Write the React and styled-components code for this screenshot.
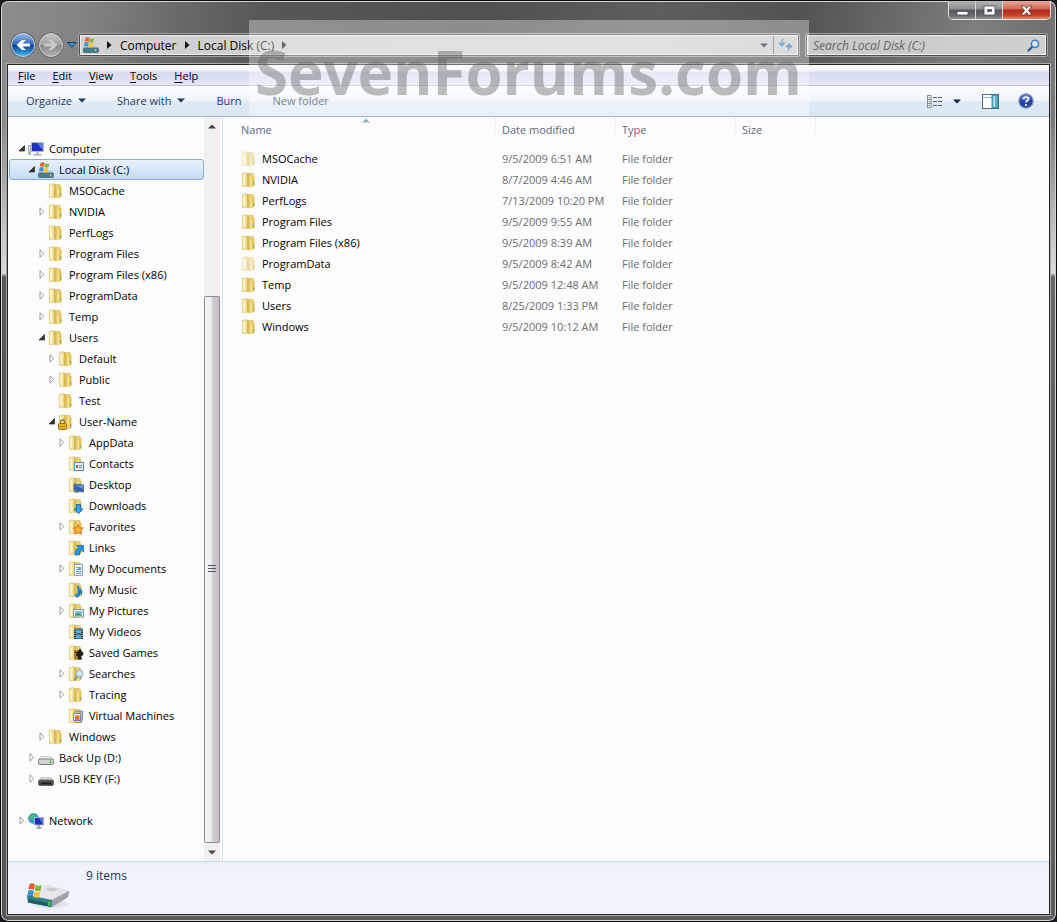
import React from "react";
import styled, { createGlobalStyle, css } from "styled-components";

const GlobalStyle = createGlobalStyle`
  * { box-sizing: border-box; }
  body {
    margin: 0;
    background: #17181c;
    font-family: "Open Sans", "Noto Sans", sans-serif;
    font-size: 11px;
    line-height: 21px;
    color: #000;
  }
  button, input { font: inherit; color: inherit; }
  button { border: 0; padding: 0; background: none; }
  svg { display: block; flex: none; }
`;

/* ---------- window frame ---------- */

const Window = styled.div`
  position: relative;
  display: flex;
  flex-direction: column;
  min-height: 100vh;
  padding: 0 5px 5px;
  border: 1px solid #0c0c10;
  border-radius: 8px;
  box-shadow: inset 0 0 0 1px #d4d4d4;
  background:
    linear-gradient(#8e8c8c, #8a8888 120px, #dcdada 272px, #5a5758 276px, #565455) left / 7px 100% no-repeat,
    linear-gradient(#747474, #7a7a7a 120px, #dedede 272px, #666 276px, #5c5c5c) right / 7px 100% no-repeat,
    linear-gradient(100deg, #8e8c8c 0, #848383 8%, #696969 17%, #575757 25%, #505050 45%, #5e5e5e 62%, #525252 75%, #7e7e7e 92%, #6c6c6c 100%) top / 100% 66px no-repeat,
    #5b5b59;
`;

const TitleArea = styled.header`
  display: flex;
  flex-direction: column;
  justify-content: space-between;
  height: 62px;
  padding-bottom: 5px;
`;

const CaptionButtons = styled.div`
  display: flex;
  align-self: flex-end;
  height: 19px;
  border: 1px solid #e4e4e4;
  border-top: 0;
  border-radius: 0 0 5px 5px;
  overflow: hidden;
`;

const CaptionButton = styled.button`
  display: flex;
  align-items: center;
  justify-content: center;
  width: ${(p) => (p.$close ? 47 : 27)}px;
  border-right: ${(p) => (p.$close ? 0 : 1)}px solid #d6d6d6;
  background: ${(p) =>
    p.$close
      ? "linear-gradient(#e8aa9c, #cf6552 45%, #b0281a 50%, #c8442c 80%, #e58a6a)"
      : "linear-gradient(#b4b4b4, #8d8d8d 45%, #58585c 50%, #6b6b6f 80%, #929296)"};
`;

const NavRow = styled.div`
  display: flex;
  align-items: center;
  height: 26px;
  padding: 0 3px 0 4px;
`;

const NavButtons = styled.div`
  display: flex;
  align-items: center;
  gap: 2px;
`;

const fieldFrame = css`
  display: flex;
  align-items: stretch;
  height: 24px;
  border: 1px solid #a2a2a2;
  border-radius: 2px;
  box-shadow: inset 0 0 0 1px #4d4d4d, inset 0 0 0 2px #f0f0f0;
  padding: 2px;
`;

const AddressBar = styled.div`
  ${fieldFrame}
  flex: 1;
  margin-right: 5px;
  background: linear-gradient(90deg, #d2d2d2, #cdcdcd 30%, #d3d3d3 70%, #c9c9c9);
`;

const Crumbs = styled.nav`
  display: flex;
  align-items: center;
  flex: 1;
`;

const Crumb = styled.button`
  margin: 0 8px;
  font-size: 12px;
`;

const DriveSlot = styled.span`
  padding: 0 8px 0 2px;
`;

const AddressTool = styled.button`
  display: flex;
  align-items: center;
  justify-content: center;
  width: ${(p) => (p.$wide ? 24 : 18)}px;
  border-left: ${(p) => (p.$wide ? 1 : 0)}px solid #6f6f6f;
`;

const SearchBox = styled.label`
  ${fieldFrame}
  align-items: center;
  width: 243px;
  background: linear-gradient(90deg, #c9c9c9, #d0d0d0);
  padding: 0 7px;
`;

const SearchInput = styled.input`
  flex: 1;
  min-width: 0;
  border: 0;
  padding: 0;
  background: transparent;
  outline: 0;
  font-size: 12px;
  font-style: italic;
  &::placeholder { color: #646464; opacity: 1; }
`;

/* ---------- client area ---------- */

const Client = styled.main`
  display: flex;
  flex-direction: column;
  flex: 1;
  border: 1px solid #a9a9a9;
  box-shadow: inset 0 0 0 1px #252528;
  padding: 1px;
  background: #fcfcfc;
`;

const MenuBar = styled.nav`
  display: flex;
  gap: 1px;
  height: 21px;
  padding: 0 2px;
  border-bottom: 1px solid #bcc2da;
  background: linear-gradient(#fff, #f2f4fc 30%, #d6dbef 36%, #e3e7f7);
`;

const MenuItem = styled.button`
  padding: 0 8px;
  & u { text-underline-offset: 2px; }
`;

const Toolbar = styled.div`
  display: flex;
  align-items: center;
  height: 31px;
  padding: 0 15px 0 18px;
  border-bottom: 1px solid #a7b6c8;
  background: linear-gradient(#fdfeff, #eef5fc 48%, #dfeaf6 52%, #dbe6f4);
  color: #1e395b;
`;

const ToolButton = styled.button`
  display: flex;
  align-items: center;
  gap: 6px;
  margin-right: 31px;
  padding-bottom: 2px;
`;

const ToolbarRight = styled.div`
  display: flex;
  align-items: center;
  margin-left: auto;
`;

const IconButton = styled.button`
  margin-left: ${(p) => p.$gap || 0}px;
`;

const Body = styled.div`
  display: flex;
  flex: 1;
`;

/* ---------- folder tree ---------- */

const TreePane = styled.aside`
  display: flex;
  width: 215px;
  border-right: 1px solid #d6e5f5;
`;

const Tree = styled.ul`
  flex: 1;
  margin: 0;
  padding: 21px 0 21px 1px;
  list-style: none;
`;

const TreeItem = styled.li`
  margin-top: ${(p) => (p.$apart ? 21 : 0)}px;
`;

const TreeRow = styled.button`
  display: flex;
  align-items: center;
  width: 100%;
  height: 21px;
  padding-left: ${(p) => 7 + p.$level * 10}px;
  border: 1px solid ${(p) => (p.$selected ? "#84acdd" : "transparent")};
  border-radius: 3px;
  background: ${(p) => (p.$selected ? "linear-gradient(#e9f2fd, #c4dcfa)" : "none")};
  white-space: nowrap;
`;

const Expander = styled.span`
  display: flex;
  justify-content: flex-end;
  width: 9px;
  margin-right: 2px;
`;

const TreeLabel = styled.span`
  margin-left: 5px;
`;

const ScrollTrack = styled.div`
  display: flex;
  flex-direction: column;
  align-items: center;
  width: 16px;
  margin-right: 2px;
  background: #f0f0f0;
`;

const ScrollArrow = styled.button`
  display: flex;
  align-items: center;
  justify-content: center;
  width: 16px;
  height: 18px;
`;

const ScrollGap = styled.div`
  flex: 161;
`;

const ScrollThumb = styled.div`
  display: flex;
  align-items: center;
  justify-content: center;
  flex: 547;
  width: 16px;
  border: 1px solid #8c8c90;
  border-radius: 2px;
  background: linear-gradient(90deg, #f6f6f6, #ececee 45%, #cfcfd3 55%, #bfbfc5);
`;

/* ---------- file list ---------- */

const ListPane = styled.section`
  flex: 1;
  min-width: 0;
  padding-left: 12px;
`;

const FileTable = styled.table`
  border-collapse: collapse;
  table-layout: fixed;
  width: 581px;
`;

const Col = styled.col`
  width: ${(p) => p.$w}px;
`;

const HeadCell = styled.th`
  position: relative;
  height: 31px;
  padding: 2px 6px 8px;
  text-align: left;
  font-weight: 400;
  color: #5d6b80;
  background: linear-gradient(#e2e8f2, #fcfcfc) right top / 1px 20px no-repeat;
`;

const SortMark = styled.span`
  position: absolute;
  top: 1px;
  left: 50%;
  margin-left: -4px;
`;

const Cell = styled.td`
  height: 21px;
  padding: 0 6px;
  color: #6d6d6d;
  white-space: nowrap;
`;

const FileName = styled.span`
  display: flex;
  align-items: center;
  gap: 5px;
  color: #000;
`;

const Faded = styled.span`
  opacity: ${(p) => (p.$on ? 0.5 : 1)};
`;

const StatusBar = styled.footer`
  display: flex;
  justify-content: flex-start;
  height: 53px;
  padding: 3px 17px;
  gap: 15px;
  border-top: 1px solid #cbd9e8;
  background: linear-gradient(#e9eef7, #f0f3fb 4px);
  color: #1e395b;
  font-size: 12px;
  & svg { align-self: flex-end; }
`;

const Watermark = styled.div`
  position: absolute;
  top: 19px;
  left: 50%;
  width: 560px;
  height: 96px;
  margin-left: -280px;
  background: rgba(255, 255, 255, 0.35);
  color: rgba(90, 90, 90, 0.4);
  font-size: 60px;
  font-weight: 700;
  line-height: 104px;
  text-align: center;
  white-space: nowrap;
  pointer-events: none;
`;

/* ---------- drawings ---------- */

const Flag = ({ x = 0, y = 0, s = 1 }) => (
  <g transform={`translate(${x} ${y}) scale(${s})`}>
    <path d="M1 1q2-1.500 4 0l-.7 4q-2-1.300-4.100-.2z" fill="#e8622a" />
    <path d="M5.500 1.300q2 1.200 4.300 0l-.9 4q-2 1-4.100-.2z" fill="#7fba3c" />
    <path d="M.2 5.500q2-1 4 .2l-.8 4q-1.900-1.200-4 0z" fill="#3f92d8" />
    <path d="M4.700 6q2 1.100 4.100.1l-.8 4q-2 1-4.100-.2z" fill="#f7c531" />
  </g>
);

const badges = {
  lock: (
    <g>
      <path d="M2.500 10V8a2 2 0 0 1 4 0v2" fill="none" stroke="#8a7636" strokeWidth="1.300" />
      <rect x=".5" y="9.500" width="8" height="6" rx="1" fill="#e6b422" stroke="#9a7413" />
      <path d="M1.500 12.500h6" stroke="#b98a12" />
    </g>
  ),
  card: (
    <g>
      <rect x="6.500" y="6.500" width="9" height="8" fill="#eaf6fb" stroke="#4f94b8" />
      <rect x="8" y="9" width="2" height="3" fill="#4a7fb0" />
      <path d="M11 9.500h3M11 11.500h3" stroke="#5a8db0" />
    </g>
  ),
  monitor: (
    <g>
      <path d="M6 7l9.500 1v7L6 13.500z" fill="#2c5fb8" stroke="#5b6f8c" />
      <path d="M7 8l8 .8v3z" fill="#6fa0e2" />
      <path d="M6 15h5" stroke="#555" />
    </g>
  ),
  down: <path d="M8.500 6.500h4v4.500h2.500L10.500 15.500 6 11h2.500z" fill="#35a5ea" stroke="#1770b4" />,
  star: <path d="M10 5.500l1.500 3.200 3.800.3-2.600 2.500 1 3.700-3.500-2-3.400 2 .8-3.800L5 9l3.700-.4z" fill="#f9b233" stroke="#d9701a" />,
  link: <path d="M8.500 5.500h7V12l-2.300-2Q11 12 11.500 15H7Q6.500 10 10.500 7.700z" fill="#2497dc" stroke="#176aa8" strokeWidth=".7" />,
  doc: (
    <g>
      <path d="M6.500 3.500h8v11h-8z" fill="#f7fafc" stroke="#8fa2b4" />
      <path d="M8 6.500h5M8 8.500h2M8 10.500h5M8 12.500h5" stroke="#6b9ac6" />
      <rect x="10" y="6" width="3" height="3" fill="#6aa2d6" />
    </g>
  ),
  note: <path d="M9.800 3.500q1 2.500 3 4 2.300 2 .5 5 0-3-1.800-4v4.500q-.7 2.500-3.200 2-1.800-1.700.2-3 .8-.5 1.600-.2z" fill="#2a9be0" stroke="#1a74b4" />,
  photo: (
    <g>
      <rect x="5.500" y="6.500" width="10" height="7.500" fill="#f4f8fb" stroke="#7d93a6" />
      <path d="M7 8h7v3H7z" fill="#7cc0ea" />
      <path d="M7 12.800v-1.600l3-1.500 4 2v1.100z" fill="#3d9a5b" />
    </g>
  ),
  film: (
    <g>
      <path d="M6 4.500h9V15H6z" fill="#2f3a44" />
      <path d="M8 5.500h5v4H8zM8 10.500h5v4H8z" fill="#59a9dc" />
      <path d="M7 5v10M14 5v10" stroke="#dfe5ea" strokeDasharray="1 1" />
    </g>
  ),
  spade: (
    <g>
      <path d="M6 5h5v9.500H6z" fill="#b07a2a" />
      <path d="M7 7l3 1-2 2 3 2" stroke="#3c2a12" fill="none" />
      <path d="M12 3q.5 2.500 3 4.500 1.500 3.500-2 3.500l1 3.500h-4.500l1.200-3.500Q7.500 11 9 7.500q2.500-2 3-4.500z" fill="#1c1c1c" />
    </g>
  ),
  lens: (
    <g>
      <path d="M9.500 10.500L6 14.500" stroke="#8a8f96" strokeWidth="1.800" />
      <circle cx="11.500" cy="7.500" r="3.500" fill="#d3e8f4" stroke="#8ba5b8" />
    </g>
  ),
  vm: (
    <g>
      <path d="M5.500 5.500h7v7h-7z" fill="#f3e9e2" stroke="#7a86b8" />
      <path d="M7 7.500h4.500V12H7z" fill="#e3742c" />
      <path d="M7.500 3.500h6.800v9" fill="none" stroke="#7d8ec4" strokeWidth="1.500" />
      <path d="M8 14.500h6M13.500 12v3" stroke="#8a90a0" />
    </g>
  ),
};

const FolderIcon = ({ badge }) => (
  <svg width="16" height="16" viewBox="0 0 16 16">
    <path d="M6.500 1.500h5.700V14H6.500z" fill="#ecd27a" stroke="#d6b659" strokeWidth=".6" />
    <path d="M9.500 4.500l4-.7V14l-4 1z" fill="#e3c252" />
    <path d="M9.500 5l1.600-.3V14.200l-1.600.4z" fill="#f6e596" />
    <path d="M1.300 1.300L6 .7V14.300l-4.700.2z" fill="#f3e39f" stroke="#dcc36d" strokeWidth=".6" />
    <path d="M6 .8L8.300 2.200V15.500L6 14.300z" fill="#d8ba54" />
    <path d="M2.200 2.500h2v10.500h-2z" fill="#fbf5cd" />
    <path d="M12.700 10.500v2" stroke="#5aa37c" />
    {badges[badge]}
  </svg>
);

const DiskIcon = () => (
  <svg width="16" height="16" viewBox="0 0 16 16">
    <path d="M2.500 8.500h11l2.500 3H0z" fill="#c5ccd0" />
    <rect x=".5" y="11" width="15" height="4.500" rx="1" fill="#3f8091" stroke="#5d6e76" />
    <path d="M12.500 12.200v2" stroke="#8df06a" strokeWidth="1.400" />
    <Flag x={1.5} y={0} s={1} />
  </svg>
);

const ComputerIcon = () => (
  <svg width="16" height="16" viewBox="0 0 16 16">
    <path d="M.5 4.500h2v9h-2z" fill="#d8dde0" stroke="#92999e" strokeWidth=".7" />
    <path d="M1 12h1" stroke="#5dbb3d" />
    <rect x="3.500" y="1.500" width="12" height="9" fill="#1b2fc0" stroke="#b5b9c4" />
    <path d="M9 2h6v8z" fill="#5b78ea" />
    <path d="M8.500 11h2v2h3v1.500h-8V13h3z" fill="#a8adb4" />
  </svg>
);

const DriveIcon = ({ dark }) => (
  <svg width="16" height="16" viewBox="0 0 16 16">
    <path d="M3 6.500h10l2.500 3H.5z" fill={dark ? "#dcdcdc" : "#efefef"} stroke="#b6b6b6" strokeWidth=".6" />
    <rect x=".5" y="9" width="15" height="5.500" rx="1.500" fill={dark ? "#4c4e50" : "#d2d4d6"} stroke={dark ? "#6b6b6b" : "#7d8084"} />
    {dark ? <path d="M3 12.500h10" stroke="#222" strokeWidth="2" /> : <path d="M12.500 10.500v2.500" stroke="#46b83a" strokeWidth="1.500" />}
  </svg>
);

const NetworkIcon = () => (
  <svg width="16" height="16" viewBox="0 0 16 16">
    <circle cx="5.500" cy="5.500" r="5" fill="#2f9fd8" stroke="#2a78a8" strokeWidth=".6" />
    <path d="M2 2.500l4-1.500 1 2-3 3H1zM6 6l3-1v3L6 10z" fill="#52c06a" />
    <rect x="6.500" y="4.500" width="9" height="7.500" fill="#1b2fc0" stroke="#aeb3c0" />
    <path d="M11 5h4v6.500z" fill="#5673e6" />
    <path d="M11 12v3M8.500 15h5" stroke="#8b95a8" strokeWidth="1.500" />
  </svg>
);

const icons = {
  computer: <ComputerIcon />,
  disk: <DiskIcon />,
  drive: <DriveIcon />,
  usb: <DriveIcon dark />,
  network: <NetworkIcon />,
};

const Triangle = ({ open }) => (
  <svg width="8" height="9" viewBox="0 0 8 9">
    {open ? (
      <path d="M6.500 1.500v5.500H1z" fill="#3a3a3a" stroke="#222" strokeWidth=".7" />
    ) : (
      <path d="M2 .8L5.800 4.500 2 8.200z" fill="#fff" stroke="#9a9a9a" />
    )}
  </svg>
);

const Caret = ({ color = "#1e395b", up }) => (
  <svg width="8" height="5" viewBox="0 0 8 5">
    <path d={up ? "M0 4.500h8L4 .5z" : "M0 .5h8L4 4.500z"} fill={color} />
  </svg>
);

const CrumbArrow = () => (
  <svg width="5" height="8" viewBox="0 0 5 8">
    <path d="M0 0v8l4.500-4z" fill="#151515" />
  </svg>
);

const NavIcon = ({ forward }) => (
  <svg width="26" height="26" viewBox="0 0 26 26">
    <defs>
      <linearGradient id={forward ? "fwd" : "back"} x2="0" y2="1">
        <stop offset="0" stopColor={forward ? "#c4c4c4" : "#9fc0ea"} />
        <stop offset=".48" stopColor={forward ? "#a2a2a2" : "#2c63b4"} />
        <stop offset=".52" stopColor={forward ? "#868686" : "#0d3f94"} />
        <stop offset="1" stopColor={forward ? "#b5b5b5" : "#3fc0f4"} />
      </linearGradient>
    </defs>
    <circle cx="13" cy="13" r="12.500" fill="#4a4c52" />
    <circle cx="13" cy="13" r="11.500" fill={`url(#${forward ? "fwd" : "back"})`} stroke={forward ? "#cfcfcf" : "#c9d6ea"} />
    <path
      d={forward ? "M6 11.500h7.500L10 8h4l5.500 5-5.500 5h-4l3.500-3.500H6z" : "M20 11.500h-7.500L16 8h-4l-5.500 5 5.500 5h4l-3.500-3.500H20z"}
      fill={forward ? "#c9c9c9" : "#fff"}
    />
  </svg>
);

const BigDrive = () => (
  <svg width="46" height="32" viewBox="0 0 46 32">
    <ellipse cx="25" cy="25" rx="18" ry="4" fill="#dfe2e8" />
    <path d="M2 17L22 6l22 6-1 6-16 10-24-5z" fill="#b4b7ba" />
    <path d="M2 16L22 6l22 6-17 9z" fill="#e6e7e8" />
    <path d="M20 10q6-2.500 13 0-6 5-13 0z" fill="#c9cbcd" />
    <path d="M2 16l25 5-.5 7L3 23.500z" fill="#2d7f8c" />
    <path d="M3 20l23 5v3L3 23.500z" fill="#1c5f60" />
    <path d="M23.500 22.500l2 .4-.3 4-2-.4z" fill="#52d24a" />
    <path d="M27 21l17-9-1 6-16 10z" fill="#9fa2a6" />
    <Flag x={3} y={4} s={1.400} />
  </svg>
);

/* ---------- data ---------- */

const tree = [
  ["Computer", 0, "computer", "open"],
  ["Local Disk (C:)", 1, "disk", "open"],
  ["MSOCache", 2],
  ["NVIDIA", 2, "", "closed"],
  ["PerfLogs", 2],
  ["Program Files", 2, "", "closed"],
  ["Program Files (x86)", 2, "", "closed"],
  ["ProgramData", 2, "", "closed"],
  ["Temp", 2, "", "closed"],
  ["Users", 2, "", "open"],
  ["Default", 3, "", "closed"],
  ["Public", 3, "", "closed"],
  ["Test", 3],
  ["User-Name", 3, "lock", "open"],
  ["AppData", 4, "", "closed"],
  ["Contacts", 4, "card"],
  ["Desktop", 4, "monitor"],
  ["Downloads", 4, "down"],
  ["Favorites", 4, "star", "closed"],
  ["Links", 4, "link"],
  ["My Documents", 4, "doc", "closed"],
  ["My Music", 4, "note"],
  ["My Pictures", 4, "photo", "closed"],
  ["My Videos", 4, "film"],
  ["Saved Games", 4, "spade"],
  ["Searches", 4, "lens", "closed"],
  ["Tracing", 4, "", "closed"],
  ["Virtual Machines", 4, "vm"],
  ["Windows", 2, "", "closed"],
  ["Back Up (D:)", 1, "drive", "closed"],
  ["USB KEY (F:)", 1, "usb", "closed"],
  ["Network", 0, "network", "closed"],
];

const files = [
  ["MSOCache", "9/5/2009 6:51 AM", true],
  ["NVIDIA", "8/7/2009 4:46 AM"],
  ["PerfLogs", "7/13/2009 10:20 PM"],
  ["Program Files", "9/5/2009 9:55 AM"],
  ["Program Files (x86)", "9/5/2009 8:39 AM"],
  ["ProgramData", "9/5/2009 8:42 AM", true],
  ["Temp", "9/5/2009 12:48 AM"],
  ["Users", "8/25/2009 1:33 PM"],
  ["Windows", "9/5/2009 10:12 AM"],
];

const menus = ["File", "Edit", "View", "Tools", "Help"];

/* ---------- page ---------- */

export default function App() {
  return (
    <Window>
      <GlobalStyle />
      <TitleArea>
        <CaptionButtons>
          <CaptionButton aria-label="Minimize">
            <svg width="13" height="13" viewBox="0 0 13 13">
              <rect x="1" y="7.500" width="11" height="3.500" fill="#fff" stroke="#4b4b55" strokeWidth=".8" />
            </svg>
          </CaptionButton>
          <CaptionButton aria-label="Maximize">
            <svg width="13" height="13" viewBox="0 0 13 13">
              <path d="M1 2h11v9H1zM4.500 5.500v2h4v-2z" fill="#fff" fillRule="evenodd" stroke="#4b4b55" strokeWidth=".8" />
            </svg>
          </CaptionButton>
          <CaptionButton $close aria-label="Close">
            <svg width="13" height="13" viewBox="0 0 13 13">
              <path d="M1 2h3.500l2 2.500 2-2.500H12L8.500 6.500 12 11H8.500l-2-2.500-2 2.500H1l3.500-4.500z" fill="#fff" stroke="#5a3436" strokeWidth=".8" />
            </svg>
          </CaptionButton>
        </CaptionButtons>
        <NavRow>
          <NavButtons>
            <button aria-label="Back"><NavIcon /></button>
            <button aria-label="Forward"><NavIcon forward /></button>
            <button aria-label="Recent pages">
              <svg width="12" height="8" viewBox="0 0 12 8">
                <path d="M1.500 1.500h8.500L5.800 6.500z" fill="#3f8ed0" stroke="#1c3c62" />
              </svg>
            </button>
          </NavButtons>
          <AddressBar>
            <Crumbs aria-label="Address">
              <DriveSlot><DiskIcon /></DriveSlot>
              <CrumbArrow />
              <Crumb>Computer</Crumb>
              <CrumbArrow />
              <Crumb>Local Disk (C:)</Crumb>
              <CrumbArrow />
            </Crumbs>
            <AddressTool aria-label="Previous locations"><Caret color="#26264a" /></AddressTool>
            <AddressTool $wide aria-label="Refresh">
              <svg width="15" height="14" viewBox="0 0 15 14">
                <path d="M5.500 1Q3.500 2.500 3.800 5.500M.8 5h6L3.800 8.500z" stroke="#2f7cc0" fill="#3a8fd4" />
                <path d="M9.500 13q2-1.500 1.700-4.500M8.200 9h6l-3-3.500z" stroke="#2f6cae" fill="#3a7ec4" />
              </svg>
            </AddressTool>
          </AddressBar>
          <SearchBox>
            <SearchInput placeholder="Search Local Disk (C:)" aria-label="Search Local Disk (C:)" />
            <svg width="13" height="13" viewBox="0 0 13 13">
              <path d="M5.500 7.500L1.500 11.500" stroke="#2c5a9c" strokeWidth="2.200" strokeLinecap="round" />
              <circle cx="8" cy="4.800" r="3.600" fill="#dfeaf4" stroke="#3a7fc2" strokeWidth="1.600" />
            </svg>
          </SearchBox>
        </NavRow>
      </TitleArea>

      <Client>
        <MenuBar>
          {menus.map((m) => (
            <MenuItem key={m}><u>{m[0]}</u>{m.slice(1)}</MenuItem>
          ))}
        </MenuBar>
        <Toolbar>
          <ToolButton>Organize <Caret /></ToolButton>
          <ToolButton>Share with <Caret /></ToolButton>
          <ToolButton>Burn</ToolButton>
          <ToolButton>New folder</ToolButton>
          <ToolbarRight>
            <IconButton aria-label="Change view">
              <svg width="16" height="13" viewBox="0 0 16 13">
                {[0, 4, 8].map((y) => (
                  <g key={y} transform={`translate(0 ${y})`}>
                    <rect x=".5" y=".5" width="3.500" height="4" fill="#fff" stroke="#7f8a99" />
                    <path d="M1.500 2.500h1.500" stroke={y ? (y === 4 ? "#d05050" : "#4a68b0") : "#6a9a60"} />
                    <path d="M6 2.500h4M11 2.500h4" stroke="#55627a" />
                  </g>
                ))}
              </svg>
            </IconButton>
            <IconButton $gap={10} aria-label="More view options"><Caret color="#0e2340" /></IconButton>
            <IconButton $gap={21} aria-label="Preview pane">
              <svg width="17" height="15" viewBox="0 0 17 15">
                <rect x=".5" y=".5" width="16" height="14" fill="#fff" stroke="#4d6a86" />
                <path d="M1 3.500h9.500" stroke="#9db4c8" />
                <rect x="10" y="1" width="6" height="13" fill="#58b4cc" stroke="#39758c" strokeWidth=".8" />
                <path d="M11.500 2h1.500v11h-1.500z" fill="#b9e6f0" />
              </svg>
            </IconButton>
            <IconButton $gap={19} aria-label="Help">
              <svg width="16" height="16" viewBox="0 0 16 16">
                <circle cx="8" cy="8" r="7.200" fill="#2243a8" stroke="#8f9cb8" strokeWidth="1.300" />
                <path d="M2.500 6a5.700 5.700 0 0 1 11 0Q8 9 2.500 6z" fill="#5a7ad4" />
                <path d="M5.500 6.200Q5.700 4 8 4t2.400 2Q10.400 7.300 9 8 8 8.600 8 9.600" fill="none" stroke="#fff" strokeWidth="1.700" />
                <circle cx="8" cy="12" r="1.100" fill="#fff" />
              </svg>
            </IconButton>
          </ToolbarRight>
        </Toolbar>

        <Body>
          <TreePane>
            <Tree>
              {tree.map(([label, level, icon, state]) => (
                <TreeItem key={label} $apart={label === "Network"}>
                  <TreeRow $level={level} $selected={icon === "disk"}>
                    <Expander>{state && <Triangle open={state === "open"} />}</Expander>
                    {icons[icon] || <FolderIcon badge={icon} />}
                    <TreeLabel>{label}</TreeLabel>
                  </TreeRow>
                </TreeItem>
              ))}
            </Tree>
            <ScrollTrack>
              <ScrollArrow aria-label="Scroll up"><Caret color="#444" up /></ScrollArrow>
              <ScrollGap />
              <ScrollThumb>
                <svg width="8" height="8" viewBox="0 0 8 8">
                  <path d="M0 .5h8M0 3.500h8M0 6.500h8" stroke="#55555a" />
                </svg>
              </ScrollThumb>
              <ScrollArrow aria-label="Scroll down"><Caret color="#444" /></ScrollArrow>
            </ScrollTrack>
          </TreePane>

          <ListPane>
            <FileTable>
              <colgroup>
                <Col $w={261} /><Col $w={120} /><Col $w={120} /><Col $w={80} />
              </colgroup>
              <thead>
                <tr>
                  <HeadCell>Name<SortMark><Caret color="#8fb4cc" up /></SortMark></HeadCell>
                  <HeadCell>Date modified</HeadCell>
                  <HeadCell>Type</HeadCell>
                  <HeadCell>Size</HeadCell>
                </tr>
              </thead>
              <tbody>
                {files.map(([name, date, hidden]) => (
                  <tr key={name}>
                    <Cell>
                      <FileName><Faded $on={hidden}><FolderIcon /></Faded>{name}</FileName>
                    </Cell>
                    <Cell>{date}</Cell>
                    <Cell>File folder</Cell>
                    <Cell />
                  </tr>
                ))}
              </tbody>
            </FileTable>
          </ListPane>
        </Body>

        <StatusBar>
          <BigDrive />
          <span>9 items</span>
        </StatusBar>
      </Client>

      <Watermark aria-hidden="true">SevenForums.com</Watermark>
    </Window>
  );
}
